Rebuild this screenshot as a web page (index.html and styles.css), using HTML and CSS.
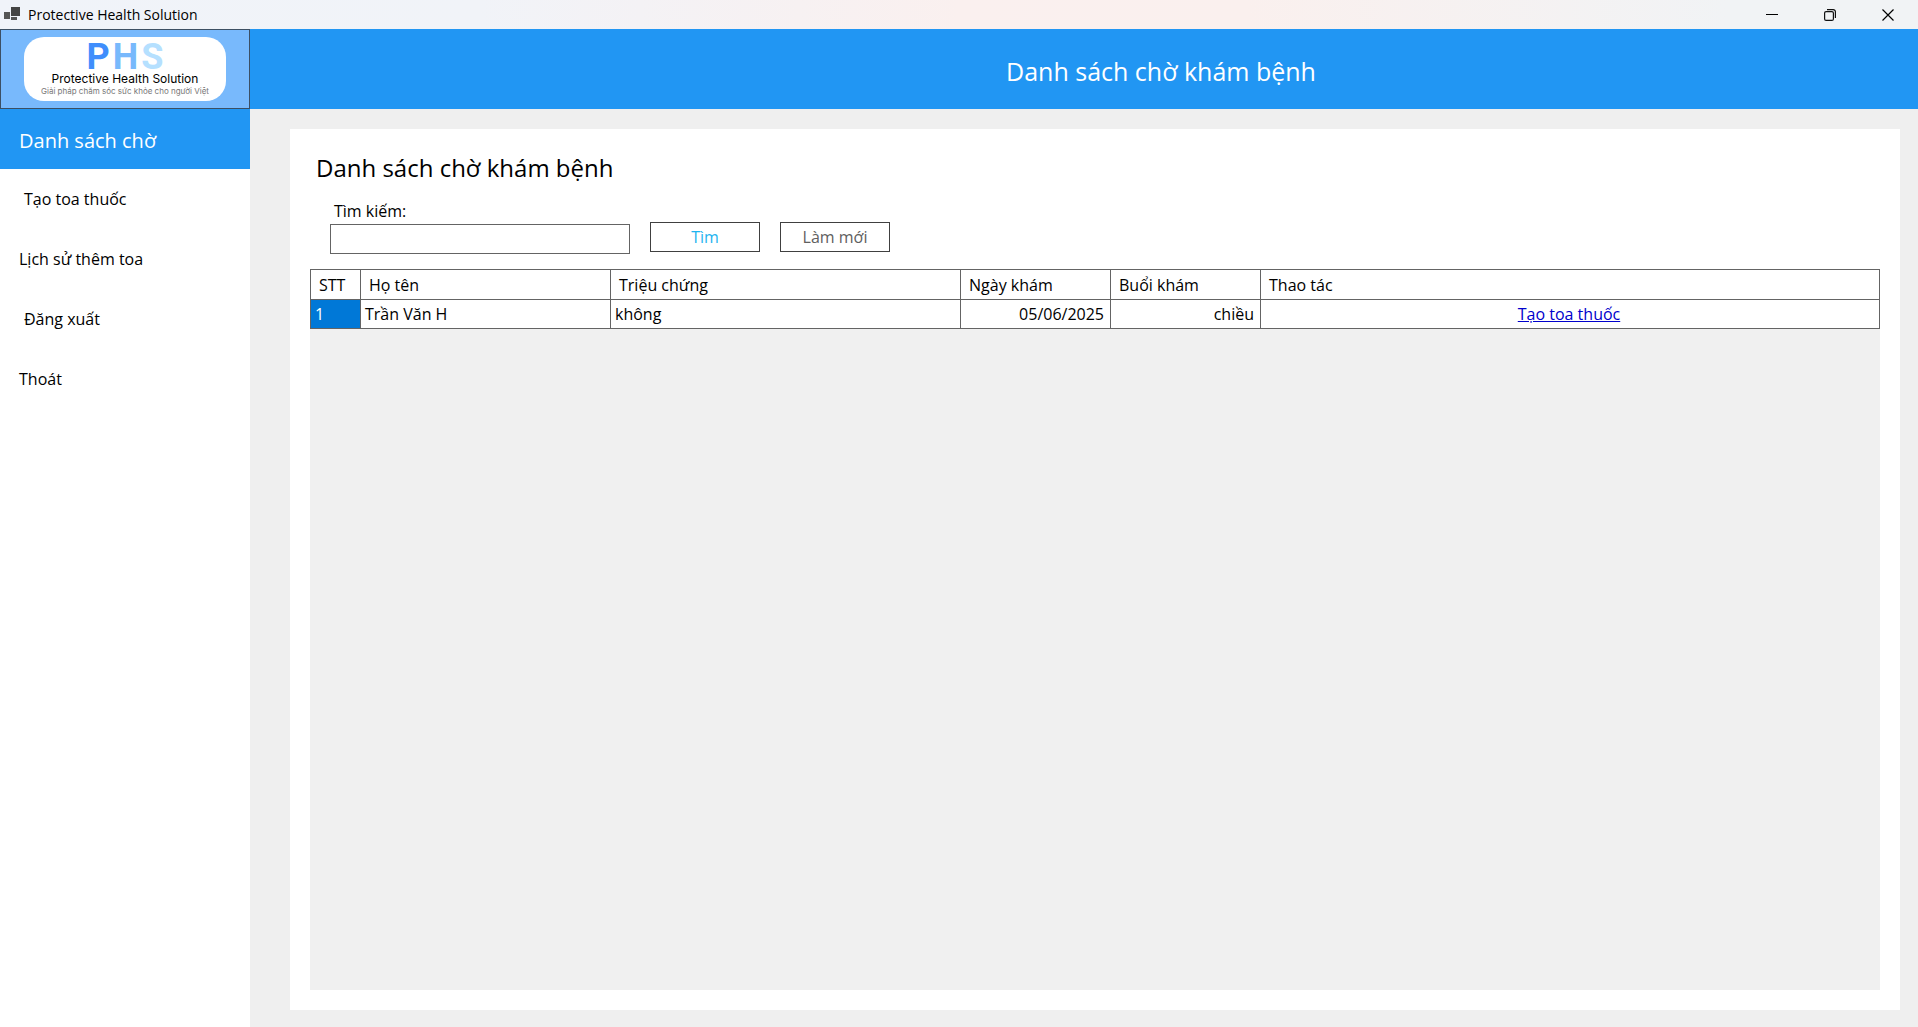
FILE: index.html
```html
<!DOCTYPE html>
<html lang="vi">
<head>
<meta charset="utf-8">
<meta name="viewport" content="width=device-width, initial-scale=1">
<title>Protective Health Solution</title>
<link rel="stylesheet" href="styles.css">
</head>
<body>
<div class="titlebar">
  <svg class="app-icon" width="16" height="16" viewBox="0 0 16 16" aria-hidden="true">
    <path d="M7 0h9v9H7z" fill="#444"/>
    <path d="M0 5h6v7H0z" fill="#555"/>
    <path d="M7 10h6v3H7z" fill="#555"/>
  </svg>
  <span class="app-name">Protective Health Solution</span>
  <div class="window-controls">
    <button type="button" class="window-button" aria-label="Minimize">
      <svg width="12" height="12" viewBox="0 0 12 12"><path d="M0 5.500h12" stroke="#000" fill="none"/></svg>
    </button>
    <button type="button" class="window-button" aria-label="Restore">
      <svg width="12" height="12" viewBox="0 0 12 12" fill="none" stroke="#111" stroke-width="1.200"><rect x=".6" y="2.600" width="8.800" height="8.800" rx="1.500"/><path d="M3 .6h6.200a2.200 2.200 0 0 1 2.200 2.200V9"/></svg>
    </button>
    <button type="button" class="window-button" aria-label="Close">
      <svg width="12" height="12" viewBox="0 0 12 12"><path d="M.5.5l11 11M11.500.5l-11 11" stroke="#000" stroke-width="1.200" fill="none"/></svg>
    </button>
  </div>
</div>

<div class="app">
  <aside class="sidebar">
    <div class="brand">
      <div class="logo">
        <div class="logo-letters"><span class="letter-p">P</span><span class="letter-h">H</span><span class="letter-s">S</span></div>
        <div class="logo-name">Protective Health Solution</div>
        <div class="logo-slogan">Giải pháp chăm sóc sức khỏe cho người Việt</div>
      </div>
    </div>
    <nav class="menu">
      <button type="button" class="menu-item active">Danh sách chờ</button>
      <button type="button" class="menu-item indented">Tạo toa thuốc</button>
      <button type="button" class="menu-item">Lịch sử thêm toa</button>
      <button type="button" class="menu-item indented">Đăng xuất</button>
      <button type="button" class="menu-item">Thoát</button>
    </nav>
  </aside>

  <div class="content">
    <header class="page-header"><h1>Danh sách chờ khám bệnh</h1></header>
    <main class="page">
      <section class="card">
        <h2>Danh sách chờ khám bệnh</h2>
        <form class="search">
          <div class="field">
            <label for="keyword">Tìm kiếm:</label>
            <input type="text" id="keyword">
          </div>
          <button type="button" class="button primary">Tìm</button>
          <button type="button" class="button">Làm mới</button>
        </form>
        <div class="grid">
          <table>
            <colgroup>
              <col class="col-number"><col class="col-name"><col class="col-symptom"><col class="col-date"><col class="col-session"><col>
            </colgroup>
            <thead>
              <tr><th>STT</th><th>Họ tên</th><th>Triệu chứng</th><th>Ngày khám</th><th>Buổi khám</th><th>Thao tác</th></tr>
            </thead>
            <tbody>
              <tr>
                <td class="selected">1</td><td>Trần Văn H</td><td>không</td>
                <td class="right">05/06/2025</td><td class="right">chiều</td>
                <td class="center"><a href="#">Tạo toa thuốc</a></td>
              </tr>
            </tbody>
          </table>
        </div>
      </section>
    </main>
  </div>
</div>
</body>
</html>
```
FILE: styles.css
```css
* { box-sizing: border-box; }

body {
  margin: 0;
  min-height: 100vh;
  display: flex;
  flex-direction: column;
  background: #efefef;
  color: #000;
  font: 16px/20px "Open Sans", "Noto Sans", sans-serif;
}

button, input { font: inherit; color: inherit; }
h1, h2 { margin: 0; font-weight: 400; }

.titlebar {
  display: flex;
  align-items: center;
  height: 29px;
  padding-left: 4px;
  background: linear-gradient(90deg, #f0f3f9 0%, #f1f3f8 25%, #faf0ef 50%, #faf0ee 65%, #f1f3f5 90%, #f1f3f5 100%);
}
.app-name { margin-left: 8px; font-size: 14px; }
.window-controls { display: flex; margin-left: auto; padding-right: 1px; }
.window-button {
  display: flex;
  align-items: center;
  justify-content: center;
  width: 58px;
  height: 28px;
  padding: 0;
  border: 0;
  background: none;
}

.app { display: flex; flex: 1; }

.sidebar { width: 250px; flex: none; background: #fff; }
.brand {
  height: 80px;
  padding: 7px 23px;
  border: 1px solid #3c4f63;
  background: #78b9fc;
}
.logo {
  height: 64px;
  padding-top: 4px;
  border-radius: 20px;
  background: #fff;
  text-align: center;
  white-space: nowrap;
}
.logo-letters {
  display: flex;
  justify-content: center;
  gap: 3px;
  font: 700 36px/32px Roboto, sans-serif;
}
.letter-p { color: #3f8efc; }
.letter-h { color: #78b9fc; }
.letter-s { color: #b5e0ff; }
.logo-name { font: 400 12px/12px Inter, sans-serif; }
.logo-slogan { font: 8px/12px Inter, sans-serif; color: #777; }

.menu { display: flex; flex-direction: column; }
.menu-item {
  height: 60px;
  padding: 0 19px;
  border: 0;
  background: #fff;
  text-align: left;
}
.menu-item.indented { padding-left: 24px; }
.menu-item.active { padding-top: 3px; background: #2196f3; color: #fff; font-size: 20px; }

.content { display: flex; flex: 1; flex-direction: column; min-width: 0; }
.page-header {
  display: flex;
  align-items: center;
  justify-content: center;
  height: 80px;
  padding: 4px 0 0 154px;
  background: #2196f3;
  color: #fff;
}
.page-header h1 { font-size: 25px; line-height: 32px; }

.page { display: flex; flex: 1; padding: 20px 18px 17px 40px; }
.card {
  display: flex;
  flex: 1;
  flex-direction: column;
  min-width: 0;
  padding: 20px;
  background: #fff;
}
.card h2 { padding: 3px 6px 0; font-size: 24px; line-height: 32px; }

.search {
  display: flex;
  align-items: flex-end;
  gap: 20px;
  margin: 17px 0 15px 20px;
}
.field { display: flex; flex-direction: column; gap: 3px; width: 300px; }
.field label { padding-left: 4px; }
.field input {
  height: 30px;
  padding: 0 4px;
  border: 1px solid #646464;
  background: #fff;
}
.button {
  width: 110px;
  height: 30px;
  margin-bottom: 2px;
  padding: 0;
  border: 1px solid #404040;
  background: #fff;
  color: #606060;
}
.button.primary { color: #1eb4f0; }

.grid { flex: 1; background: #f0f0f0; }
table {
  width: 100%;
  table-layout: fixed;
  border-collapse: collapse;
  background: #fff;
}
.col-number { width: 50px; }
.col-name { width: 250px; }
.col-symptom { width: 350px; }
.col-date, .col-session { width: 150px; }
th, td {
  height: 30px;
  padding: 0 6px 0 4px;
  border: 1px solid #646464;
  font-weight: 400;
  text-align: left;
  white-space: nowrap;
}
th { padding: 0 8px; }
td { height: 29px; }
td.selected { background: #0078d7; color: #fff; }
td.right { text-align: right; }
td.center { text-align: center; }
td a { color: #00c; }
```
